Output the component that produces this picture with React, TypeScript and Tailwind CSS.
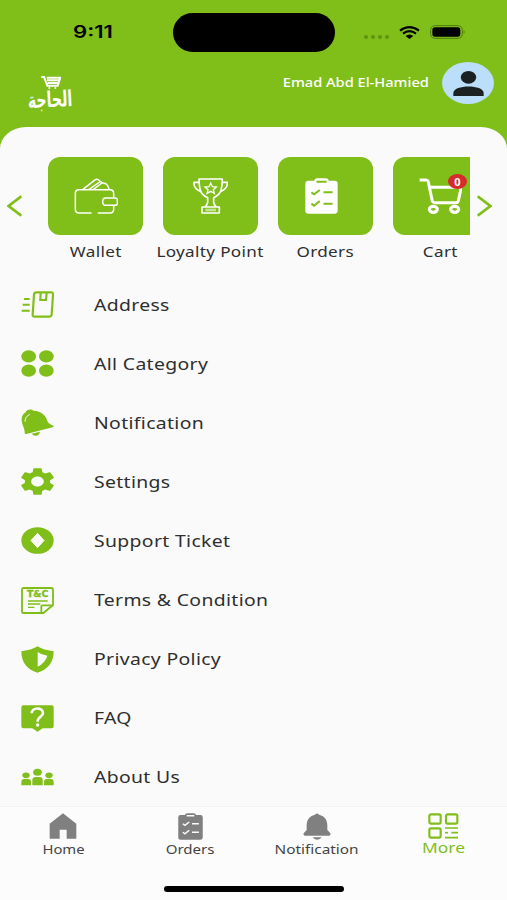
import type { ReactNode } from "react";
import { clsx } from "clsx";

type GlyphProps = {
  className?: string;
  viewBox?: string;
  children: ReactNode;
};

function Glyph({ className = "h-[27px] w-[33px]", viewBox = "0 0 99 81", children }: GlyphProps) {
  return (
    <svg className={clsx("shrink-0", className)} viewBox={viewBox} preserveAspectRatio="none" fill="currentColor">
      {children}
    </svg>
  );
}

function AddressIcon() {
  return (
    <Glyph>
      <path d="M9 24h17M5 41h21M2 59h24" stroke="currentColor" strokeWidth="6" />
      <path
        d="M46 4h44q7 0 6 7l-4 59q-1 7-8 7H41q-7 0-6-7l4-59q1-7 7-7zM59 5l-1 22h17l2-22"
        fill="none"
        stroke="currentColor"
        strokeWidth="6.5"
      />
    </Glyph>
  );
}

function CategoryIcon() {
  return (
    <Glyph>
      <ellipse cx="23" cy="19" rx="22" ry="18.5" />
      <ellipse cx="76" cy="19" rx="22" ry="18.5" />
      <ellipse cx="23" cy="62" rx="22" ry="18.5" />
      <ellipse cx="76" cy="62" rx="22" ry="18.5" />
    </Glyph>
  );
}

function RingingBellIcon() {
  return (
    <Glyph>
      <path d="M14 10C16 1 32-1 37 5C62 6 76 21 79 36C82 44 90 47 98 51Q99 54 95 55L16 75Q10 76 11 70C12 59 3 48 2 35C1 24 5 15 14 10Z" />
      <path d="M32 74L57 68Q55 78 46 80Q38 82 32 74Z" />
      <path d="M12 37Q12 23 25 17" fill="none" stroke="#fafafa" strokeWidth="3" strokeLinecap="round" />
    </Glyph>
  );
}

function SettingsIcon() {
  return (
    <Glyph viewBox="2.6 2.3 18.8 19.4">
      <path d="M19.14 12.94c.04-.3.06-.61.06-.94 0-.32-.02-.64-.07-.94l2.03-1.58c.18-.14.23-.41.12-.61l-1.92-3.32c-.12-.22-.37-.29-.59-.22l-2.39.96c-.5-.38-1.03-.7-1.62-.94l-.36-2.54c-.04-.24-.24-.41-.48-.41h-3.84c-.24 0-.43.17-.47.41l-.36 2.54c-.59.24-1.13.57-1.62.94l-2.39-.96c-.22-.08-.47 0-.59.22L2.74 8.87c-.12.21-.08.47.12.61l2.03 1.58c-.05.3-.09.63-.09.94s.02.64.07.94l-2.03 1.58c-.18.14-.23.41-.12.61l1.92 3.32c.12.22.37.29.59.22l2.39-.96c.5.38 1.03.7 1.62.94l.36 2.54c.05.24.24.41.48.41h3.84c.24 0 .44-.17.47-.41l.36-2.54c.59-.24 1.13-.56 1.62-.94l2.39.96c.22.08.47 0 .59-.22l1.92-3.32c.12-.22.07-.47-.12-.61l-2.01-1.58zM12 15.6c-1.98 0-3.6-1.62-3.6-3.6s1.62-3.6 3.6-3.6 3.6 1.62 3.6 3.6-1.62 3.6-3.6 3.6z" />
    </Glyph>
  );
}

function SupportIcon() {
  return (
    <Glyph>
      <ellipse cx="49.5" cy="40.5" rx="48.5" ry="40" />
      <path d="M49.5 19L69 40.5L49.5 62L30 40.5Z" fill="#fafafa" stroke="#fafafa" strokeWidth="3" strokeLinejoin="round" />
    </Glyph>
  );
}

function TermsIcon() {
  return (
    <Glyph>
      <path
        d="M7 3h84q5 0 5 5v46L67 78H7q-4 0-4-4V8q0-5 4-5zM95 55H64q-3 0-3 3v19"
        fill="none"
        stroke="currentColor"
        strokeWidth="5.5"
      />
      <path d="M21 42h59M21 51h37M21 61h19" stroke="currentColor" strokeWidth="4" />
      <text
        x="18"
        y="31"
        textLength="64"
        lengthAdjust="spacingAndGlyphs"
        className="font-['DejaVu_Sans',sans-serif] text-[24px] font-bold"
        stroke="currentColor"
        strokeWidth="1"
      >
        T&amp;C
      </text>
    </Glyph>
  );
}

function PrivacyIcon() {
  return (
    <Glyph>
      <path d="M49.5 1C60 8 74 13 98 16C98 48 82 71 49.5 80C17 71 1 48 1 16C25 13 39 8 49.5 1Z" />
      <path d="M50 18Q62 27 79 29Q73 50 50 62Z" fill="#fafafa" />
    </Glyph>
  );
}

function FaqIcon() {
  return (
    <Glyph>
      <path d="M7 1h85q6 0 6 6v57q0 6-6 6H65L49.5 80L34 70H7q-6 0-6-6V7q0-6 6-6z" />
      <path d="M32 25C32 6 66 6 66 24C66 35 50 35 50 50" fill="none" stroke="#fafafa" strokeWidth="8" />
      <circle cx="50" cy="60" r="5.2" fill="#fafafa" />
    </Glyph>
  );
}

function AboutIcon() {
  return (
    <Glyph>
      <ellipse cx="49.5" cy="25" rx="13" ry="10.5" />
      <path d="M34 64V49q0-10 11-10h9q11 0 11 10v15z" />
      <ellipse cx="15" cy="34" rx="11" ry="8.5" />
      <path d="M1 64V54q0-9 9-9h11q9 0 9 9v10z" />
      <ellipse cx="84" cy="34" rx="11" ry="8.5" />
      <path d="M69 64V54q0-9 9-9h11q9 0 9 9v10z" />
    </Glyph>
  );
}

function WalletIcon() {
  return (
    <Glyph className="h-9 w-11" viewBox="0 0 132 108">
      <path
        d="M51 105H15Q4 105 4 94V46Q4 35 15 35H108Q119 35 119 46V60M119 82V94Q119 105 108 105H73M96 60H124Q130 60 130 66V76Q130 82 124 82H96Q86 82 86 71Q86 60 96 60ZM26 35L64 5Q69 2 74 6L84 14M44 35L77 12M57 35L84 15Q100 12 106 35"
        fill="none"
        stroke="currentColor"
        strokeWidth="4.5"
        strokeLinecap="round"
        strokeLinejoin="round"
      />
    </Glyph>
  );
}

function TrophyIcon() {
  return (
    <Glyph className="h-9 w-[35px]" viewBox="0 0 105 108">
      <path
        d="M18 3H88Q88 22 84 38Q79 51 62 59V73Q63 80 70 87H36Q43 80 44 73V59Q27 51 22 38Q18 22 18 3ZM19 13H3Q1 32 24 41M87 13H103Q105 32 82 41M27 87H79V105H27Z"
        fill="none"
        stroke="currentColor"
        strokeWidth="5"
        strokeLinejoin="round"
      />
      <path d="M53 15L58 26L70 27L61 35L64 46L53 40L42 46L45 35L36 27L48 26Z" fill="none" stroke="currentColor" strokeWidth="4" />
      <path d="M37 92h32v8H37z" fillOpacity=".55" />
    </Glyph>
  );
}

type ClipboardProps = { className: string; mark: string };

function ClipboardIcon({ className, mark }: ClipboardProps) {
  return (
    <Glyph className={className} viewBox="0 0 98 108">
      <path d="M10 8H27Q29 1 37 1H61Q69 1 71 8H88Q97 8 97 17V98Q97 107 88 107H10Q1 107 1 98V17Q1 8 10 8Z" />
      <path
        d="M34 11H64M19 43L27 49L44 36M55 43H82M19 77L27 83L44 69M55 77H82"
        fill="none"
        stroke={mark}
        strokeWidth="6"
      />
    </Glyph>
  );
}

function CartIcon() {
  return (
    <Glyph className="h-9 w-[43px]" viewBox="0 0 129 108">
      <path
        d="M2 6H22Q26 6 28 12L40 70Q42 74 48 74H111Q116 74 118 68L127 28H32"
        fill="none"
        stroke="currentColor"
        strokeWidth="9"
        strokeLinejoin="round"
      />
      <ellipse cx="43" cy="94" rx="12" ry="9" fill="none" stroke="currentColor" strokeWidth="9.5" />
      <ellipse cx="107" cy="94" rx="12" ry="9" fill="none" stroke="currentColor" strokeWidth="9.5" />
    </Glyph>
  );
}

const shortcuts = [
  { label: "Wallet", icon: <WalletIcon /> },
  { label: "Loyalty Point", icon: <TrophyIcon /> },
  { label: "Orders", icon: <ClipboardIcon className="mr-2 h-9 w-[33px]" mark="#80be19" /> },
  { label: "Cart", icon: <CartIcon />, badge: 0 },
];

const menu = [
  { label: "Address", icon: <AddressIcon /> },
  { label: "All Category", icon: <CategoryIcon /> },
  { label: "Notification", icon: <RingingBellIcon /> },
  { label: "Settings", icon: <SettingsIcon /> },
  { label: "Support Ticket", icon: <SupportIcon /> },
  { label: "Terms & Condition", icon: <TermsIcon /> },
  { label: "Privacy Policy", icon: <PrivacyIcon /> },
  { label: "FAQ", icon: <FaqIcon /> },
  { label: "About Us", icon: <AboutIcon /> },
];

function StatusBar() {
  return (
    <div className="flex h-[64px] items-center text-black">
      <span className="mt-px ml-[73px] w-[100px] origin-left scale-x-[1.3] font-['Inter',sans-serif] text-[17px] font-semibold">
        9:11
      </span>
      <div className="h-[39px] w-[162px] rounded-full bg-black" />
      <div className="mt-[9px] ml-[29px] flex gap-[3px]">
        {[0, 1, 2, 3].map((dot) => (
          <span key={dot} className="size-1 rounded-full bg-[#5e9411]" />
        ))}
      </div>
      <Glyph className="ml-[10px] h-[13px] w-[21px]" viewBox="0 0 63 39">
        <path d="M3 14Q31-7 60 14M12 23Q31 8 51 23" fill="none" stroke="currentColor" strokeWidth="6.5" />
        <path d="M20 30Q31 21 43 30L31 39Z" />
      </Glyph>
      <Glyph className="ml-[10px] h-[14px] w-[36px]" viewBox="0 0 108 42">
        <rect x="2" y="2" width="95" height="38" rx="13" fill="none" stroke="#4f7d0e" strokeWidth="3" />
        <rect x="7" y="7" width="84" height="28" rx="8" />
        <path d="M101 15Q107 21 101 27Z" fill="#4f7d0e" />
      </Glyph>
    </div>
  );
}

function Header() {
  return (
    <header className="flex h-[63px] items-start justify-between pr-[13px] pl-[26px]">
      <div className="relative mt-3 h-8 w-[46px] text-white">
        <span
          dir="rtl"
          lang="ar"
          className="absolute right-0 -bottom-[3px] origin-right scale-x-[0.64] -rotate-3 font-['DejaVu_Sans',sans-serif] text-[22px] leading-6 font-bold whitespace-nowrap"
        >
          الحاجة
        </span>
        <Glyph className="absolute top-0 left-[15px] h-[13px] w-5" viewBox="0 0 60 39">
          <path d="M1 3H9L19 29H50L58 5H17M18 13H54M20 21H51" fill="none" stroke="currentColor" strokeWidth="6" />
          <circle cx="25" cy="36" r="3" />
          <circle cx="43" cy="36" r="3" />
        </Glyph>
      </div>
      <div className="flex items-center gap-[13px]">
        <span className="-mt-[3px] origin-right scale-x-[1.125] font-['Noto_Sans',sans-serif] text-[13px] font-medium whitespace-nowrap text-white">
          Emad Abd El-Hamied
        </span>
        <div className="-mt-[2px] flex h-[42px] w-[52px] items-center justify-center rounded-[50%] bg-[#bbdefb] text-[#1b2021]">
          <Glyph className="h-[25px] w-[31px]" viewBox="0 0 93 75">
            <ellipse cx="46.5" cy="19" rx="23" ry="19" />
            <path d="M1 75V66C1 40 92 40 92 66V75Z" />
          </Glyph>
        </div>
      </div>
    </header>
  );
}

function Chevron({ flip }: { flip?: boolean }) {
  return (
    <Glyph className={clsx("h-[22px] w-[15px] text-[#80be19]", flip && "-scale-x-100")} viewBox="0 0 45 66">
      <path d="M43 4L5 33L43 62" fill="none" stroke="currentColor" strokeWidth="8" />
    </Glyph>
  );
}

function Shortcuts() {
  return (
    <section className="flex h-[148px] items-start pt-[30px]">
      <div className="flex h-[98px] w-12 items-center pl-[7px]">
        <Chevron />
      </div>
      <div className="flex h-[110px] w-[422px] gap-5 overflow-hidden">
        {shortcuts.map(({ label, icon, badge }) => (
          <div key={label} className="flex w-[95px] shrink-0 flex-col items-center">
            <div className="relative flex h-[78px] w-[95px] shrink-0 items-center justify-center rounded-xl bg-[#80be19] text-white">
              {icon}
              {badge !== undefined && (
                <span className="absolute top-[17px] left-[55px] flex h-[15px] w-[19px] items-center justify-center rounded-[50%] bg-[#d52b2b] font-['Noto_Sans',sans-serif] text-[11px] leading-none font-bold">
                  {badge}
                </span>
              )}
            </div>
            <span className="mt-[5px] scale-x-[1.14] text-[15px] leading-[22px] tracking-[0.3px] whitespace-nowrap">
              {label}
            </span>
          </div>
        ))}
      </div>
      <div className="flex h-[98px] items-center pl-[7px]">
        <Chevron flip />
      </div>
    </section>
  );
}

function BottomNav() {
  return (
    <nav className="h-[94px] border-t border-[#f3f3f3] bg-[#fcfcfc] text-[#808080]">
      <div className="grid h-[54px] grid-cols-4 pt-[6px]">
        <div className="flex flex-col items-center">
          <Glyph className="h-[26px] w-[28px]" viewBox="0 0 84 78">
            <path d="M42 1L82 32V77H53V50H32V77H2V32Z" />
          </Glyph>
          <span className="scale-x-[1.14] text-[13px] leading-5 text-[#444]">Home</span>
        </div>
        <div className="flex flex-col items-center">
          <ClipboardIcon className="h-[27px] w-[25px]" mark="#fcfcfc" />
          <span className="-mt-px scale-x-[1.16] text-[13px] leading-5 text-[#444]">Orders</span>
        </div>
        <div className="flex flex-col items-center">
          <Glyph className="h-[27px] w-[28px]" viewBox="0 0 84 81">
            <path d="M36 5Q42-2 48 5C66 9 73 22 73 38V51L82 61Q84 67 78 68H6Q0 67 2 61L11 51V38C11 22 18 9 36 5Z" />
            <path d="M29 73H56Q52 80 42 80Q33 80 29 73Z" />
          </Glyph>
          <span className="-mt-px scale-x-[1.18] text-[13px] leading-5 text-[#444]">Notification</span>
        </div>
        <div className="flex flex-col items-center text-[#80be19]">
          <Glyph className="h-[26px] w-[31px]" viewBox="0 0 93 78">
            <g fill="none" stroke="currentColor" strokeWidth="6.5">
              <rect x="4" y="4" width="34" height="28" rx="5" />
              <rect x="54" y="4" width="34" height="28" rx="5" />
              <rect x="4" y="46" width="34" height="28" rx="5" />
              <path d="M51 45H90M70 59H90M51 74H90" strokeWidth="5" />
              <path d="M51 59H60" strokeWidth="5" />
            </g>
          </Glyph>
          <span className="-mt-[2px] scale-x-[1.16] text-[15px] leading-5">More</span>
        </div>
      </div>
      <div className="mt-[25px] ml-[164px] h-[6px] w-[180px] rounded-full bg-black" />
    </nav>
  );
}

export default function App() {
  return (
    <main className="flex h-[900px] w-[507px] flex-col overflow-hidden bg-[#80be19] font-['Noto_Sans',sans-serif] text-[#2e2e2e]">
      <StatusBar />
      <Header />
      <div className="flex flex-1 flex-col rounded-t-[26px_22px] bg-[#fafafa]">
        <Shortcuts />
        <ul className="h-[531px]">
          {menu.map(({ label, icon }) => (
            <li key={label} className="flex h-[59.1px] items-center pl-[21px] text-[#80be19]">
              {icon}
              <span className="ml-[39.5px] origin-left scale-x-[1.14] text-[17px] leading-6 tracking-[0.3px] whitespace-nowrap text-[#2e2e2e]">
                {label}
              </span>
            </li>
          ))}
        </ul>
        <BottomNav />
      </div>
    </main>
  );
}
